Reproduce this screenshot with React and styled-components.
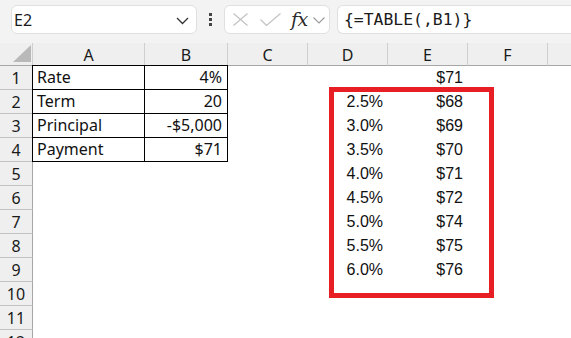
import React from "react";
import styled, { createGlobalStyle } from "styled-components";

const GlobalStyle = createGlobalStyle`
  html, body { margin: 0; padding: 0; background: #ffffff; overflow: hidden; }
  body { font-family: "Noto Sans", "Open Sans", sans-serif; }
`;

const columns = [
  { key: "A", width: 112 },
  { key: "B", width: 83 },
  { key: "C", width: 80 },
  { key: "D", width: 80 },
  { key: "E", width: 80 },
  { key: "F", width: 80 },
  { key: "G", width: 80 },
];

const data = {
  1: { A: "Rate", B: "4%", E: "$71" },
  2: { A: "Term", B: "20", D: "2.5%", E: "$68" },
  3: { A: "Principal", B: "-$5,000", D: "3.0%", E: "$69" },
  4: { A: "Payment", B: "$71", D: "3.5%", E: "$70" },
  5: { D: "4.0%", E: "$71" },
  6: { D: "4.5%", E: "$72" },
  7: { D: "5.0%", E: "$74" },
  8: { D: "5.5%", E: "$75" },
  9: { D: "6.0%", E: "$76" },
  10: {},
  11: {},
  12: {},
};

const App = () => {
  const rows = Object.keys(data).map(Number);
  return (
    <>
      <GlobalStyle />
      <Window>
        <Toolbar>
          <NameBox>
            <span>E2</span>
            <svg width="13" height="8" viewBox="0 0 13 8">
              <path d="M1 1l5.5 5.5L12 1" fill="none" stroke="#333" strokeWidth="1.3" />
            </svg>
          </NameBox>
          <Kebab>
            <i /><i /><i />
          </Kebab>
          <FxBox>
            <svg width="17" height="13" viewBox="0 0 17 13">
              <path d="M1.5 0.5l14 12M15.5 0.5l-14 12" fill="none" stroke="#c2c2c2" strokeWidth="1.2" />
            </svg>
            <svg width="21" height="13" viewBox="0 0 21 13">
              <path d="M0.5 6.5l6 6L20.5 0.5" fill="none" stroke="#c2c2c2" strokeWidth="1.2" />
            </svg>
            <FxLabel>fx</FxLabel>
            <svg width="12" height="7" viewBox="0 0 12 7">
              <path d="M0.5 0.5l5.5 5.5L11.5 0.5" fill="none" stroke="#9a9a9a" strokeWidth="1.1" />
            </svg>
          </FxBox>
          <FormulaBox>{"{=TABLE(,B1)}"}</FormulaBox>
        </Toolbar>
        <Sheet>
          <Grid>
            <Corner>
              <svg width="18" height="17" viewBox="0 0 18 17">
                <path d="M18 0V17H0Z" fill="#b9b9b9" />
              </svg>
            </Corner>
            {columns.map((c) => (
              <ColHeader key={c.key}>{c.key === "G" ? "" : c.key}</ColHeader>
            ))}
            {rows.map((r) => (
              <React.Fragment key={r}>
                <RowHeader>{r}</RowHeader>
                {columns.map((c) => {
                  const inTable = r <= 4 && (c.key === "A" || c.key === "B");
                  const value = data[r][c.key] || "";
                  return (
                    <Cell
                      key={c.key}
                      $table={inTable}
                      $first={inTable && r === 1}
                      $left={inTable && c.key === "A"}
                      $align={c.key === "A" ? "left" : "right"}
                      $arial={c.key === "D" || c.key === "E"}
                    >
                      {value}
                    </Cell>
                  );
                })}
              </React.Fragment>
            ))}
          </Grid>
          <Highlight />
        </Sheet>
      </Window>
    </>
  );
};

export default App;

const Window = styled.div`
  width: 571px;
  height: 338px;
  overflow: hidden;
  background: #ffffff;
`;

const Toolbar = styled.div`
  height: 43px;
  box-sizing: border-box;
  background: #f3f3f3;
  display: flex;
  align-items: flex-start;
  padding: 5px 0 0 11px;
`;

const NameBox = styled.div`
  width: 186px;
  height: 29px;
  box-sizing: border-box;
  background: #ffffff;
  border: 1px solid #e0e0e0;
  border-radius: 6px;
  display: flex;
  align-items: center;
  justify-content: space-between;
  padding: 0 7px 0 2px;
  font-size: 16px;
  color: #1a1a1a;

  svg { margin-top: 2px; }
`;

const Kebab = styled.div`
  width: 27px;
  height: 29px;
  display: flex;
  flex-direction: column;
  align-items: center;
  justify-content: center;
  gap: 2.5px;

  i {
    display: block;
    width: 2.5px;
    height: 2.5px;
    background: #444;
  }
`;

const FxBox = styled.div`
  width: 106px;
  height: 29px;
  box-sizing: border-box;
  background: #ffffff;
  border: 1px solid #e0e0e0;
  border-radius: 6px;
  display: flex;
  align-items: center;
  padding: 0 0 0 7px;

  svg:nth-child(2) { margin-left: 11px; }
  svg:last-child { margin-left: 5px; margin-top: 2px; }
`;

const FxLabel = styled.span`
  margin-left: 10px;
  font-family: "DejaVu Serif", "Liberation Serif", serif;
  font-style: italic;
  font-size: 19px;
  color: #2a2a2a;
  line-height: 1;
  letter-spacing: -0.5px;
`;

const FormulaBox = styled.div`
  flex: 1;
  margin-left: 7px;
  height: 29px;
  box-sizing: border-box;
  background: #ffffff;
  border: 1px solid #e0e0e0;
  border-right: none;
  border-radius: 6px 0 0 6px;
  display: flex;
  align-items: center;
  padding-left: 6px;
  font-family: "DejaVu Sans Mono", "Liberation Mono", monospace;
  font-size: 16.4px;
  color: #1a1a1a;
`;

const Sheet = styled.div`
  position: relative;
`;

const Grid = styled.div`
  display: grid;
  grid-template-columns: 33px ${columns.map((c) => c.width + "px").join(" ")};
  grid-template-rows: 23px;
  grid-auto-rows: 24px;
`;

const Corner = styled.div`
  background: #efefef;
  border-bottom: 1px solid #a6a6a6;
  border-right: 1px solid #cfcfcf;
  display: flex;
  align-items: flex-end;
  justify-content: flex-end;
  padding: 0 1px 3px 0;
`;

const ColHeader = styled.div`
  background: #efefef;
  border-right: 1px solid #cfcfcf;
  border-bottom: 1px solid #a6a6a6;
  display: flex;
  align-items: center;
  justify-content: center;
  font-size: 16px;
  color: #1a1a1a;
  padding-top: 1px;
`;

const RowHeader = styled.div`
  background: #efefef;
  border-right: 1px solid #a6a6a6;
  border-bottom: 1px solid #c4c4c4;
  display: flex;
  align-items: center;
  justify-content: center;
  font-size: 16px;
  color: #1a1a1a;
  padding-top: 1px;
`;

const Cell = styled.div`
  box-sizing: border-box;
  display: flex;
  align-items: flex-end;
  justify-content: ${(p) => (p.$align === "left" ? "flex-start" : "flex-end")};
  padding: 0 5px 1px 4px;
  font-family: ${(p) =>
    p.$arial ? '"Liberation Sans", Arial, sans-serif' : '"Noto Sans", "Open Sans", sans-serif'};
  font-size: 16px;
  line-height: 22px;
  color: #111;
  white-space: nowrap;
  border-right: ${(p) => (p.$table ? "1px solid #000" : "none")};
  border-bottom: ${(p) => (p.$table ? "1px solid #000" : "none")};
  border-top: ${(p) => (p.$first ? "1px solid #000" : "none")};
  border-left: ${(p) => (p.$left ? "1px solid #000" : "none")};
  margin-top: ${(p) => (p.$first ? "-1px" : "0")};
  margin-left: ${(p) => (p.$left ? "-1px" : "0")};
`;

const Highlight = styled.div`
  position: absolute;
  left: 329px;
  top: 44px;
  width: 165px;
  height: 211px;
  box-sizing: border-box;
  border: 5px solid #e81e25;
  pointer-events: none;
`;
